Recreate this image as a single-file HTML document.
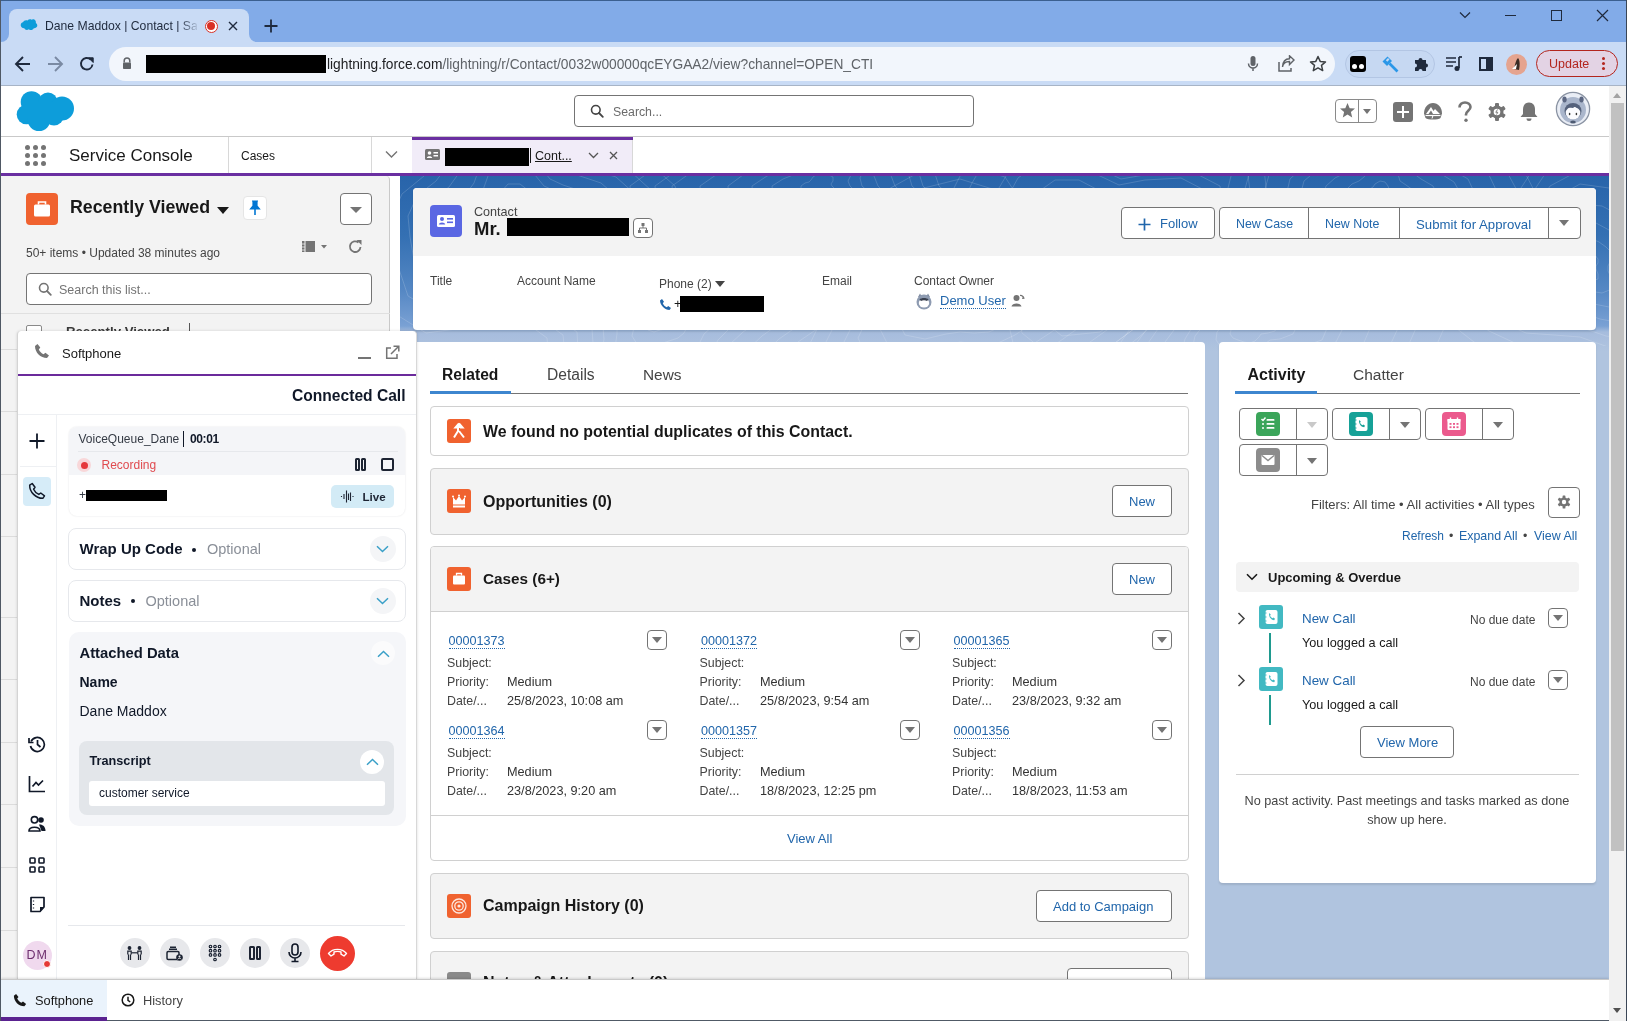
<!DOCTYPE html>
<html><head><meta charset="utf-8">
<style>
*{box-sizing:border-box;margin:0;padding:0}
html,body{width:1627px;height:1021px;overflow:hidden;background:#fff;font-family:"Liberation Sans",sans-serif;color:#181818}
.a{position:absolute}
.t{position:absolute;white-space:nowrap;line-height:1}
svg{display:block}
.btn{position:absolute;background:#fff;border:1px solid #747474;border-radius:4px}
.lnk{color:#2166ab}
.dd{position:absolute;width:20px;height:20px;border:1px solid #747474;border-radius:4px;background:#fff}
.dd:after{content:"";position:absolute;left:4px;top:6px;border-left:5px solid transparent;border-right:5px solid transparent;border-top:6px solid #747474}
</style></head><body><div id="root" style="position:absolute;left:0;top:0;width:1627px;height:1021px;overflow:hidden;will-change:transform">

<!-- ============ CHROME FRAME ============ -->
<div class="a" style="left:0;top:0;width:1627px;height:86px;background:#82abe8"></div>
<div class="a" style="left:0;top:0;width:1627px;height:1px;background:#3b5f8f"></div>
<div class="a" style="left:0;top:0;width:1px;height:1021px;background:#4f5864;z-index:50"></div>
<!-- active tab -->
<div class="a" style="left:9px;top:9px;width:240px;height:40px;background:#c9dbf5;border-radius:8px 8px 0 0"></div>
<!-- toolbar -->
<div class="a" style="left:0;top:42px;width:1627px;height:43px;background:#c9dbf5"></div>
<div class="a" style="left:0;top:85px;width:1627px;height:1px;background:#a7b4c6"></div>

<!-- tab concave corners -->
<div class="a" style="left:249px;top:34px;width:10px;height:10px;background:#c9dbf5"></div>
<div class="a" style="left:249px;top:32px;width:12px;height:10px;background:#82abe8;border-radius:0 0 0 8px"></div>
<div class="a" style="left:0px;top:34px;width:9px;height:10px;background:#c9dbf5"></div>
<div class="a" style="left:-2px;top:32px;width:11px;height:10px;background:#82abe8;border-radius:0 0 8px 0"></div>
<!-- favicon cloud -->
<svg class="a" style="left:20px;top:19px" width="18" height="13" viewBox="0 0 18 13"><path d="M7.5 1.5c1-1.2 2.7-1.6 4-.8 .6-.5 1.5-.7 2.3-.4 1.7.6 2.4 2.3 2 3.6 1.4.8 1.9 2.5 1.1 3.9-.6 1.1-1.9 1.6-3.1 1.4-.6 1.3-2 2.1-3.5 1.8-.6-.1-1.1-.4-1.5-.8-.9.9-2.4 1.1-3.5.4-.6-.3-1-.9-1.2-1.5C2.7 9.3 1.2 8.4.8 6.8.4 5 1.6 3.3 3.3 3c.4-1.4 2.2-2.2 4.2-1.5z" fill="#0d9dda"/></svg>
<div class="t" style="left:45px;top:20px;font-size:12.2px;color:#1f2a3d;width:152px;overflow:hidden">Dane Maddox | Contact | Sal</div>
<div class="a" style="left:180px;top:14px;width:20px;height:24px;background:linear-gradient(90deg,rgba(201,219,245,0),#c9dbf5)"></div>
<!-- record dot -->
<div class="a" style="left:204.5px;top:19.5px;width:13px;height:13px;border-radius:50%;border:1.3px solid #d93025;background:#fff"></div>
<div class="a" style="left:207px;top:22px;width:8px;height:8px;border-radius:50%;background:#d93025"></div>
<!-- close x -->
<svg class="a" style="left:228px;top:21px" width="10" height="10" viewBox="0 0 10 10"><path d="M1 1L9 9M9 1L1 9" stroke="#1f2a3d" stroke-width="1.4"/></svg>
<!-- new tab + -->
<svg class="a" style="left:264px;top:19px" width="14" height="14" viewBox="0 0 14 14"><path d="M7 0.5V13.5M0.5 7H13.5" stroke="#1f2a3d" stroke-width="1.8"/></svg>
<!-- window controls -->
<svg class="a" style="left:1459px;top:11px" width="12" height="8" viewBox="0 0 12 8"><path d="M1 1.5L6 6.5L11 1.5" fill="none" stroke="#1f2a3d" stroke-width="1.2"/></svg>
<div class="a" style="left:1505px;top:15px;width:11px;height:1px;background:#1f2a3d"></div>
<div class="a" style="left:1551px;top:10px;width:11px;height:11px;border:1.2px solid #1f2a3d"></div>
<svg class="a" style="left:1596px;top:9px" width="13" height="13" viewBox="0 0 13 13"><path d="M1 1L12 12M12 1L1 12" stroke="#1f2a3d" stroke-width="1.2"/></svg>
<!-- nav buttons -->
<svg class="a" style="left:14px;top:55px" width="18" height="18" viewBox="0 0 18 18"><path d="M16 9H2.5M9 2L2 9L9 16" fill="none" stroke="#1f2a3d" stroke-width="1.9"/></svg>
<svg class="a" style="left:46px;top:55px" width="18" height="18" viewBox="0 0 18 18"><path d="M2 9H15.5M9 2L16 9L9 16" fill="none" stroke="#7a8aa3" stroke-width="1.9"/></svg>
<svg class="a" style="left:78px;top:55px" width="18" height="18" viewBox="0 0 18 18"><path d="M14.5 9.5A5.8 5.8 0 1 1 12.8 4.6" fill="none" stroke="#1f2a3d" stroke-width="1.9"/><path d="M10.5 2.8H15.2V7.5Z" fill="#1f2a3d" stroke="#1f2a3d" stroke-width="1"/></svg>
<!-- omnibox -->
<div class="a" style="left:109px;top:47px;width:1226px;height:34px;background:#f2f6fc;border-radius:17px"></div>
<svg class="a" style="left:122px;top:57px" width="10" height="13" viewBox="0 0 10 13"><path d="M2.2 5.5V3.8A2.8 2.8 0 0 1 7.8 3.8V5.5" fill="none" stroke="#5f6368" stroke-width="1.5"/><rect x="1" y="5.5" width="8" height="6.5" rx=".8" fill="#5f6368"/></svg>
<div class="a" style="left:146px;top:55px;width:180px;height:18px;background:#000"></div>
<div class="t" style="left:327px;top:58px;font-size:13.75px;color:#5f6368"><span style="color:#202124">lightning.force.com</span>/lightning/r/Contact/0032w00000qcEYGAA2/view?channel=OPEN_CTI</div>
<!-- mic, share, star -->
<svg class="a" style="left:1246px;top:55px" width="14" height="18" viewBox="0 0 14 18"><rect x="4.5" y="1" width="5" height="10" rx="2.5" fill="#5f6368"/><path d="M2.5 8.5A4.5 4.5 0 0 0 11.5 8.5M7 13V16" fill="none" stroke="#5f6368" stroke-width="1.5"/></svg>
<svg class="a" style="left:1277px;top:55px" width="18" height="18" viewBox="0 0 18 18"><path d="M2 7V16H14V13" fill="none" stroke="#5f6368" stroke-width="1.5"/><path d="M5.5 12C6 8 9 6.5 12.5 6.5V9.5L17 5L12.5 0.8V3.8C8 3.8 5.8 7 5.5 12Z" fill="none" stroke="#5f6368" stroke-width="1.4"/></svg>
<svg class="a" style="left:1309px;top:55px" width="18" height="18" viewBox="0 0 18 18"><path d="M9 1.5L11.2 6.4L16.5 6.9L12.5 10.4L13.7 15.6L9 12.9L4.3 15.6L5.5 10.4L1.5 6.9L6.8 6.4Z" fill="none" stroke="#3c4043" stroke-width="1.5" stroke-linejoin="round"/></svg>
<!-- extensions pill -->
<div class="a" style="left:1345px;top:50px;width:90px;height:28px;background:#c6d8f2;border:1px solid #b3c6e4;border-radius:14px"></div>
<div class="a" style="left:1350px;top:56px;width:16px;height:16px;background:#000;border-radius:3px"></div>
<div class="a" style="left:1352px;top:64px;width:5px;height:5px;background:#fff;border-radius:50%"></div>
<div class="a" style="left:1359px;top:64px;width:5px;height:5px;background:#fff;border-radius:50%"></div>
<svg class="a" style="left:1381px;top:55px" width="20" height="18" viewBox="0 0 20 18"><path d="M1.5 6.5L6.5 1.5L11 6L6 11Z" fill="#2a97e8"/><path d="M4.8 5.2L7 3L8.5 4.5L6.3 6.7Z" fill="#c6d8f2"/><path d="M8.5 8.5L16.5 16.5" stroke="#2a97e8" stroke-width="2.6"/></svg>
<svg class="a" style="left:1412px;top:55px" width="18" height="18" viewBox="0 0 18 18"><path d="M3 5H6.5A2 2 0 0 1 10.5 5H14V8.5A2 2 0 0 1 14 12.5V16H10.5A2 2 0 0 0 6.5 16H3V12.5A2 2 0 0 0 3 8.5Z" fill="#1f2a3d"/></svg>
<!-- reading list / side panel / avatar -->
<svg class="a" style="left:1445px;top:55px" width="18" height="17" viewBox="0 0 18 17"><path d="M1 3H11M1 7H11M1 11H8" stroke="#1f2a3d" stroke-width="1.7"/><path d="M14 2V13" stroke="#1f2a3d" stroke-width="1.7"/><circle cx="12" cy="13.5" r="2.5" fill="#1f2a3d"/><path d="M14 2H17" stroke="#1f2a3d" stroke-width="1.7"/></svg>
<div class="a" style="left:1479px;top:57px;width:14px;height:14px;border:2px solid #1f2a3d"></div>
<div class="a" style="left:1486px;top:57px;width:7px;height:14px;background:#1f2a3d"></div>
<div class="a" style="left:1506px;top:54px;width:21px;height:21px;border-radius:50%;background:#e5a48f"></div>
<svg class="a" style="left:1510px;top:56px" width="14" height="18" viewBox="0 0 14 18"><path d="M8 2C10 4 10 9 9 14L4 13C5 8 6 4 8 2Z" fill="#3a2b24"/><path d="M7 8L2 13L6 13Z" fill="#fff"/></svg>
<!-- update -->
<div class="a" style="left:1536px;top:50px;width:82px;height:27px;border:1.3px solid #b3261e;border-radius:14px;background:#e3d3e4"></div>
<div class="t" style="left:1549px;top:58px;font-size:12.5px;color:#b3261e">Update</div>
<div class="a" style="left:1602px;top:57px;width:3px;height:3px;border-radius:50%;background:#b3261e;box-shadow:0 5px 0 #b3261e,0 10px 0 #b3261e"></div>

<!-- ============ SF HEADER ============ -->
<div class="a" style="left:1px;top:86px;width:1608px;height:50px;background:#fff"></div>
<div class="a" style="left:1px;top:136px;width:1608px;height:1px;background:#c9c9c9"></div>
<!-- salesforce cloud -->
<svg class="a" style="left:16px;top:90px" width="60" height="42" viewBox="0 0 60 42"><g fill="#0d9dda"><circle cx="15.5" cy="12" r="10.8"/><circle cx="32" cy="12" r="9.5"/><circle cx="46" cy="18.5" r="12"/><circle cx="10.5" cy="24.5" r="9.8"/><circle cx="23" cy="29.5" r="11.5"/><circle cx="38" cy="25.5" r="10"/><rect x="10" y="12" width="36" height="16"/></g></svg>
<!-- search -->
<div class="a" style="left:574px;top:95px;width:400px;height:32px;border:1px solid #747474;border-radius:4px;background:#fff"></div>
<svg class="a" style="left:590px;top:104px" width="14" height="14" viewBox="0 0 14 14"><circle cx="5.8" cy="5.8" r="4.3" fill="none" stroke="#444" stroke-width="1.6"/><path d="M9 9L12.8 12.8" stroke="#444" stroke-width="1.8" stroke-linecap="round"/></svg>
<div class="t" style="left:613px;top:106px;font-size:12.3px;color:#6b6b6b">Search...</div>
<!-- favorites -->
<div class="a" style="left:1335px;top:99px;width:42px;height:24px;border:1px solid #8a8a8a;border-radius:4px;background:#fff"></div>
<div class="a" style="left:1358px;top:99px;width:1px;height:24px;background:#8a8a8a"></div>
<svg class="a" style="left:1339px;top:102px" width="17" height="17" viewBox="0 0 17 17"><path d="M8.5 1L10.7 6.2L16 6.6L11.9 10.1L13.2 15.5L8.5 12.6L3.8 15.5L5.1 10.1L1 6.6L6.3 6.2Z" fill="#747474"/></svg>
<div class="a" style="left:1363px;top:109px;border-left:4.5px solid transparent;border-right:4.5px solid transparent;border-top:5px solid #747474"></div>
<!-- plus -->
<div class="a" style="left:1393px;top:102px;width:20px;height:20px;border-radius:3px;background:#747474"></div>
<div class="a" style="left:1397px;top:111px;width:12px;height:2.2px;background:#fff"></div>
<div class="a" style="left:1402px;top:106px;width:2.2px;height:12px;background:#fff"></div>
<!-- trailhead -->
<svg class="a" style="left:1423px;top:102px" width="20" height="19" viewBox="0 0 20 19"><path d="M10 1C5 1 1 5.5 1 11.5L2.5 16C5 18 15 18 17.5 16L19 11.5C19 5.5 15 1 10 1Z" fill="#747474"/><path d="M3 12L8 5L10.5 9L12 7L17 12Z" fill="#fff"/><path d="M5.5 12L8 8.5L10 12Z" fill="#747474"/><path d="M2.5 13.5H17.5" stroke="#fff" stroke-width="1.2"/><path d="M10 13.5L9 16.5" stroke="#fff" stroke-width="1"/></svg>
<!-- help -->
<svg class="a" style="left:1457px;top:101px" width="16" height="22" viewBox="0 0 16 22"><path d="M2.5 6.5C2.5 3.2 5 1.5 8 1.5S13.5 3.3 13.5 6C13.5 9.5 9 10 9 13.5V14.5" fill="none" stroke="#747474" stroke-width="2.6"/><circle cx="9" cy="19.2" r="1.7" fill="#747474"/></svg>
<!-- gear -->
<svg class="a" style="left:1487px;top:102px" width="20" height="20" viewBox="0 0 20 20"><g fill="#747474"><circle cx="10" cy="10" r="6.5"/><rect x="8" y="1" width="4" height="18" rx="1"/><rect x="8" y="1" width="4" height="18" rx="1" transform="rotate(60 10 10)"/><rect x="8" y="1" width="4" height="18" rx="1" transform="rotate(120 10 10)"/></g><circle cx="10" cy="10" r="3.3" fill="#fff"/><path d="M10.5 7.5L8.8 10.3H10.8L9.5 12.5" fill="none" stroke="#747474" stroke-width="0.9"/></svg>
<!-- bell -->
<svg class="a" style="left:1519px;top:101px" width="20" height="21" viewBox="0 0 20 21"><path d="M10 1.5C6 1.5 4 4.5 4 8.5V13L1.5 16H18.5L16 13V8.5C16 4.5 14 1.5 10 1.5Z" fill="#747474"/><path d="M7.5 17.5A2.5 2.5 0 0 0 12.5 17.5Z" fill="#747474"/></svg>
<!-- avatar -->
<svg class="a" style="left:1555px;top:91px" width="36" height="36" viewBox="0 0 36 36"><circle cx="18" cy="18" r="16.6" fill="#e9edf5" stroke="#8a93a3" stroke-width="1.3"/><circle cx="18" cy="19" r="13" fill="#aab6cc"/><ellipse cx="9.5" cy="8.5" rx="2.2" ry="3" fill="#5c6782"/><ellipse cx="26.5" cy="8.5" rx="2.2" ry="3" fill="#5c6782"/><ellipse cx="18" cy="20" rx="8.5" ry="8" fill="#55627c"/><ellipse cx="18" cy="22" rx="7.3" ry="6.3" fill="#fbfcff"/><path d="M11 18C13 14 22 14 25 18L22 17L20 15.5L18 17L14 16.5Z" fill="#55627c"/><ellipse cx="14.6" cy="23" rx=".8" ry="1.2" fill="#333"/><ellipse cx="21.4" cy="23" rx=".8" ry="1.2" fill="#333"/><ellipse cx="18" cy="31" rx="2.8" ry="1.6" fill="#4d5a72"/></svg>

<!-- ============ NAV BAR ============ -->
<div class="a" style="left:1px;top:137px;width:1608px;height:36px;background:#fff"></div>
<div class="a" style="left:1px;top:173px;width:1608px;height:3px;background:#6a2fa1"></div>
<!-- app launcher -->
<svg class="a" style="left:24px;top:144px" width="23" height="23" viewBox="0 0 23 23"><g fill="#747474"><circle cx="3.5" cy="3.5" r="2.5"/><circle cx="11.5" cy="3.5" r="2.5"/><circle cx="19.5" cy="3.5" r="2.5"/><circle cx="3.5" cy="11.5" r="2.5"/><circle cx="11.5" cy="11.5" r="2.5"/><circle cx="19.5" cy="11.5" r="2.5"/><circle cx="3.5" cy="19.5" r="2.5"/><circle cx="11.5" cy="19.5" r="2.5"/><circle cx="19.5" cy="19.5" r="2.5"/></g></svg>
<div class="t" style="left:69px;top:147px;font-size:17px;color:#181818">Service Console</div>
<div class="a" style="left:228px;top:137px;width:1px;height:36px;background:#d8d8d8"></div>
<div class="t" style="left:241px;top:150px;font-size:12px;color:#181818">Cases</div>
<div class="a" style="left:371px;top:137px;width:1px;height:36px;background:#d8d8d8"></div>
<svg class="a" style="left:385px;top:150px" width="13" height="9" viewBox="0 0 13 9"><path d="M1 1.5L6.5 7L12 1.5" fill="none" stroke="#747474" stroke-width="1.4"/></svg>
<!-- active tab -->
<div class="a" style="left:412px;top:137px;width:221px;height:36px;background:#f1ecf8;border-right:1px solid #d8d8d8"></div>
<div class="a" style="left:412px;top:137px;width:221px;height:3px;background:#6a2fa1"></div>
<svg class="a" style="left:425px;top:149px" width="15" height="11" viewBox="0 0 15 11"><rect x="0" y="0" width="15" height="11" rx="1.5" fill="#747474"/><circle cx="4.5" cy="4" r="1.8" fill="#fff"/><path d="M1.8 9C2 6.5 7 6.5 7.2 9Z" fill="#fff"/><rect x="8.5" y="3" width="4.5" height="1.5" fill="#fff"/><rect x="8.5" y="6" width="4.5" height="1.5" fill="#fff"/></svg>
<div class="a" style="left:445px;top:147.5px;width:84px;height:18.5px;background:#000"></div>
<div class="a" style="left:530px;top:148px;width:1px;height:15px;background:#181818"></div>
<div class="t" style="left:535px;top:150px;font-size:12.5px;color:#181818;text-decoration:underline">Cont...</div>
<svg class="a" style="left:588px;top:152px" width="11" height="7" viewBox="0 0 11 7"><path d="M1 1L5.5 5.5L10 1" fill="none" stroke="#555" stroke-width="1.3"/></svg>
<svg class="a" style="left:609px;top:151px" width="9" height="9" viewBox="0 0 9 9"><path d="M1 1L8 8M8 1L1 8" stroke="#555" stroke-width="1.3"/></svg>

<!-- ============ LEFT LIST PANEL ============ -->
<div class="a" style="left:1px;top:176px;width:389px;height:803px;background:#f3f3f3;border-right:1px solid #c9c9c9;border-radius:0 4px 0 0"></div>
<div class="a" style="left:390px;top:176px;width:10px;height:803px;background:#fff"></div>
<div class="a" style="left:26px;top:193px;width:32px;height:32px;border-radius:4px;background:#f0622f"></div>
<svg class="a" style="left:26px;top:193px" width="32" height="32" viewBox="0 0 32 32"><rect x="8" y="11.5" width="16" height="12" rx="1.5" fill="#fff"/><path d="M12.5 11.5V9H19.5V11.5" fill="none" stroke="#fff" stroke-width="1.6"/></svg>
<div class="t" style="left:70px;top:199px;font-size:17.8px;font-weight:700;color:#181818">Recently Viewed</div>
<div class="a" style="left:217px;top:207px;border-left:6px solid transparent;border-right:6px solid transparent;border-top:7px solid #181818"></div>
<div class="a" style="left:243px;top:196px;width:24px;height:24px;border:1px solid #e5e5e5;border-radius:4px;background:#fff"></div>
<svg class="a" style="left:249px;top:200px" width="12" height="16" viewBox="0 0 12 16"><path d="M3 1H9M4 1.5V6L1.5 9H10.5L8 6V1.5Z" fill="#0176d3" stroke="#0176d3" stroke-width="1.2"/><path d="M6 9V15" stroke="#0176d3" stroke-width="1.6"/></svg>
<div class="a" style="left:340px;top:193px;width:32px;height:32px;border:1px solid #747474;border-radius:4px;background:#fff"></div>
<div class="a" style="left:350px;top:207px;border-left:6px solid transparent;border-right:6px solid transparent;border-top:6px solid #747474"></div>
<div class="t" style="left:26px;top:247px;font-size:12px;color:#444">50+ items • Updated 38 minutes ago</div>
<svg class="a" style="left:301px;top:240px" width="26" height="13" viewBox="0 0 26 13"><rect x="1" y="1" width="13" height="11" fill="#747474"/><path d="M4 1V12" stroke="#f3f3f3" stroke-width="1"/><path d="M1 4H4M1 7H4M1 10H4" stroke="#f3f3f3" stroke-width="0.8"/><path d="M20 5H26L23 8.5Z" fill="#747474"/></svg>
<svg class="a" style="left:348px;top:239px" width="15" height="15" viewBox="0 0 15 15"><path d="M12.5 8A5.3 5.3 0 1 1 10.5 3.5" fill="none" stroke="#747474" stroke-width="1.8"/><path d="M8.5 1H13.5V6Z" fill="#747474"/></svg>
<div class="a" style="left:26px;top:273px;width:346px;height:32px;border:1px solid #747474;border-radius:4px;background:#fff"></div>
<svg class="a" style="left:38px;top:282px" width="14" height="14" viewBox="0 0 14 14"><circle cx="5.8" cy="5.8" r="4.3" fill="none" stroke="#747474" stroke-width="1.6"/><path d="M9 9L12.8 12.8" stroke="#747474" stroke-width="1.8" stroke-linecap="round"/></svg>
<div class="t" style="left:59px;top:284px;font-size:12.5px;color:#747474">Search this list...</div>
<div class="a" style="left:1px;top:313px;width:389px;height:1px;background:#e0e0e0"></div>
<div class="a" style="left:26px;top:325px;width:16px;height:16px;border:1px solid #8a8a8a;border-radius:2px;background:#fff"></div>
<div class="t" style="left:66px;top:325px;font-size:13.2px;font-weight:700;color:#3a3a3a">Recently Viewed</div>
<div class="a" style="left:188.5px;top:323px;width:1px;height:10px;background:#555"></div>
<div class="a" style="left:1px;top:349px;width:17px;height:1px;background:#dcdcdc"></div>
<div class="a" style="left:1px;top:411px;width:17px;height:1px;background:#dcdcdc"></div>
<div class="a" style="left:1px;top:474px;width:17px;height:1px;background:#dcdcdc"></div>
<div class="a" style="left:1px;top:536px;width:17px;height:1px;background:#dcdcdc"></div>
<div class="a" style="left:1px;top:617px;width:17px;height:1px;background:#dcdcdc"></div>
<div class="a" style="left:1px;top:679px;width:17px;height:1px;background:#dcdcdc"></div>
<div class="a" style="left:1px;top:742px;width:17px;height:1px;background:#dcdcdc"></div>
<div class="a" style="left:1px;top:804px;width:17px;height:1px;background:#dcdcdc"></div>
<div class="a" style="left:1px;top:867px;width:17px;height:1px;background:#dcdcdc"></div>
<div class="a" style="left:1px;top:930px;width:17px;height:1px;background:#dcdcdc"></div>


<!-- ============ BRAND BG ============ -->
<div class="a" style="left:400px;top:176px;width:1209px;height:803px;background:linear-gradient(180deg,#2864aa 0px,#3470b3 60px,#5688c4 115px,#7aa1d4 150px,#a6bcdd 156px,#b0c4df 175px,#b0c4df 803px)"></div>
<svg class="a" style="left:400px;top:176px" width="1209" height="170" viewBox="0 0 1209 170"><g fill="none" stroke="#ffffff" stroke-opacity=".16" stroke-width="1"><path d="M139 40 L139 44 L138 48 L134 50 L128 50 L123 49 L120 50 L115 53 L109 53 L105 51 L103 47 L103 43 L103 40 L104 37 L107 35 L109 32 L110 28 L114 24 L120 24 L125 28 L127 31 L130 33 L135 34 L138 37 L139 40Z"/><path d="M158 40 L158 47 L157 55 L149 61 L137 61 L127 58 L120 60 L110 65 L98 67 L90 62 L87 54 L86 47 L85 40 L88 34 L94 29 L98 24 L101 16 L108 8 L120 8 L129 15 L134 22 L141 25 L150 28 L156 33 L158 40Z"/><path d="M182 40 L183 52 L181 65 L168 74 L148 74 L131 71 L120 73 L104 82 L84 85 L70 76 L65 63 L63 51 L62 40 L67 30 L77 22 L83 14 L88 0 L100 -12 L120 -12 L135 -1 L144 10 L155 15 L169 20 L179 29 L182 40Z"/><path d="M198 40 L199 55 L196 71 L180 83 L155 83 L134 78 L120 82 L100 92 L75 96 L57 85 L52 68 L50 53 L48 40 L54 27 L66 18 L74 7 L80 -10 L96 -25 L120 -25 L139 -11 L150 3 L163 9 L181 15 L194 26 L198 40Z"/><path d="M222 40 L223 60 L219 81 L199 96 L166 96 L139 90 L120 95 L94 109 L61 113 L38 99 L30 77 L27 58 L25 40 L33 23 L49 11 L59 -3 L67 -25 L88 -46 L120 -46 L145 -27 L159 -9 L177 -1 L201 7 L217 21 L222 40Z"/><path d="M241 40 L242 63 L238 89 L213 106 L174 107 L142 99 L120 105 L89 122 L50 127 L23 110 L14 84 L10 61 L8 40 L17 20 L36 5 L48 -11 L57 -37 L82 -61 L120 -62 L150 -39 L166 -17 L187 -8 L216 1 L235 18 L241 40Z"/><path d="M259 40 L260 67 L255 96 L227 116 L182 117 L146 108 L120 114 L85 134 L40 139 L8 120 L-2 90 L-6 64 L-8 40 L2 18 L24 0 L38 -19 L48 -49 L76 -76 L120 -76 L154 -51 L173 -26 L197 -15 L230 -5 L252 15 L259 40Z"/><path d="M283 40 L285 72 L279 105 L245 129 L193 130 L150 120 L120 127 L79 150 L26 157 L-11 134 L-23 99 L-28 68 L-31 40 L-18 14 L7 -7 L23 -29 L36 -64 L69 -96 L120 -97 L160 -67 L183 -37 L211 -25 L249 -13 L275 10 L283 40Z"/><path d="M432 10 L435 13 L436 17 L433 20 L428 20 L424 20 L420 21 L416 20 L413 18 L410 17 L406 16 L401 14 L401 10 L405 7 L409 6 L411 4 L413 1 L416 -1 L420 -2 L424 -2 L429 -1 L433 1 L433 5 L431 8 L432 10Z"/><path d="M450 10 L457 17 L460 27 L453 33 L440 35 L430 36 L420 36 L411 34 L404 30 L396 27 L385 25 L373 19 L372 10 L383 3 L393 -1 L398 -6 L402 -12 L410 -18 L420 -19 L431 -19 L442 -18 L451 -12 L452 -3 L448 5 L450 10Z"/><path d="M462 10 L473 20 L477 34 L467 43 L449 46 L434 47 L420 48 L407 45 L397 39 L386 34 L370 31 L353 23 L352 10 L367 -0 L382 -6 L389 -12 L394 -22 L405 -29 L420 -31 L435 -31 L452 -29 L464 -22 L465 -9 L460 2 L462 10Z"/><path d="M478 10 L492 24 L498 42 L483 55 L460 59 L439 60 L420 61 L402 57 L388 49 L374 43 L351 38 L329 27 L328 10 L347 -4 L368 -11 L377 -20 L385 -34 L400 -43 L420 -46 L441 -46 L463 -44 L480 -33 L481 -15 L474 -0 L478 10Z"/><path d="M495 10 L514 28 L521 52 L502 69 L472 74 L444 75 L420 76 L397 72 L379 61 L360 53 L331 47 L302 33 L300 10 L326 -8 L353 -18 L365 -29 L374 -47 L394 -59 L420 -63 L447 -63 L476 -60 L498 -46 L500 -23 L490 -3 L495 10Z"/><path d="M512 10 L536 32 L545 62 L522 83 L484 89 L450 90 L420 92 L391 86 L369 73 L346 63 L310 55 L275 38 L272 10 L303 -12 L337 -24 L352 -39 L363 -60 L388 -76 L420 -80 L454 -80 L489 -76 L516 -59 L518 -31 L507 -7 L512 10Z"/><path d="M523 10 L549 35 L559 67 L534 91 L491 98 L454 99 L420 101 L388 95 L363 80 L338 69 L297 61 L258 41 L255 10 L290 -15 L327 -28 L344 -44 L357 -68 L384 -86 L420 -90 L458 -90 L497 -86 L527 -67 L530 -35 L517 -9 L523 10Z"/><path d="M539 10 L569 38 L581 76 L551 103 L502 111 L459 113 L420 115 L383 108 L355 91 L325 78 L279 68 L233 46 L230 10 L270 -19 L313 -34 L332 -53 L347 -80 L379 -100 L420 -106 L463 -105 L509 -100 L544 -78 L546 -42 L532 -11 L539 10Z"/><path d="M721 60 L719 64 L717 67 L713 69 L709 71 L705 74 L700 77 L693 78 L688 74 L687 69 L686 66 L682 63 L679 60 L679 56 L681 52 L683 48 L688 45 L694 45 L700 48 L704 50 L709 49 L716 48 L722 51 L722 56 L721 60Z"/><path d="M743 60 L740 68 L735 75 L726 79 L718 82 L711 88 L700 96 L686 98 L676 90 L673 79 L671 72 L664 67 L657 60 L657 52 L661 44 L666 35 L675 29 L688 29 L700 35 L708 39 L719 37 L734 36 L745 41 L747 51 L743 60Z"/><path d="M760 60 L756 71 L749 80 L737 86 L725 90 L715 99 L700 110 L680 112 L667 101 L663 86 L660 77 L650 70 L641 60 L641 49 L646 38 L652 26 L665 17 L684 17 L700 25 L711 30 L726 28 L747 26 L763 34 L764 48 L760 60Z"/><path d="M778 60 L772 74 L764 86 L748 94 L732 100 L719 111 L700 125 L674 128 L657 114 L652 94 L648 82 L634 73 L623 60 L623 45 L629 31 L638 16 L655 4 L679 4 L700 15 L715 21 L734 18 L762 16 L782 26 L784 44 L778 60Z"/><path d="M802 60 L795 78 L784 94 L763 105 L742 112 L725 127 L700 146 L666 150 L643 131 L637 105 L631 88 L613 77 L598 60 L598 41 L607 22 L618 2 L640 -14 L672 -14 L700 0 L719 9 L745 4 L781 2 L808 16 L811 39 L802 60Z"/><path d="M814 60 L806 80 L793 98 L770 110 L747 118 L728 135 L700 156 L662 160 L636 139 L630 110 L623 92 L603 78 L587 60 L586 38 L596 17 L609 -5 L633 -22 L669 -22 L700 -7 L721 3 L750 -2 L791 -5 L820 10 L823 36 L814 60Z"/><path d="M841 60 L831 85 L815 107 L786 122 L758 132 L735 152 L700 178 L654 183 L622 157 L613 122 L605 99 L581 83 L560 60 L560 33 L572 7 L588 -20 L618 -42 L662 -41 L700 -22 L726 -10 L762 -16 L812 -20 L848 -1 L852 31 L841 60Z"/><path d="M855 60 L845 88 L827 112 L795 128 L764 139 L738 162 L700 191 L649 196 L613 167 L604 128 L595 103 L569 85 L545 60 L545 30 L559 2 L576 -29 L609 -52 L658 -52 L700 -31 L729 -17 L768 -24 L823 -28 L864 -7 L868 28 L855 60Z"/><path d="M997 20 L996 23 L996 27 L994 30 L989 32 L984 30 L980 29 L977 29 L971 31 L966 30 L963 27 L963 23 L964 20 L964 17 L967 15 L970 13 L973 11 L975 8 L980 5 L985 6 L988 10 L989 13 L992 15 L995 17 L997 20Z"/><path d="M1016 20 L1016 27 L1014 34 L1010 42 L1000 45 L989 43 L980 39 L973 40 L962 43 L950 42 L944 35 L944 27 L944 20 L946 14 L952 8 L959 5 L964 1 L970 -7 L980 -13 L991 -10 L998 -2 L1000 5 L1006 9 L1013 14 L1016 20Z"/><path d="M1038 20 L1037 31 L1034 42 L1028 54 L1012 60 L994 56 L980 50 L968 51 L951 56 L932 55 L922 44 L922 31 L923 20 L926 10 L935 2 L947 -4 L955 -11 L964 -23 L980 -32 L998 -28 L1008 -14 L1013 -3 L1021 3 L1033 10 L1038 20Z"/><path d="M1062 20 L1060 35 L1057 52 L1048 68 L1026 77 L999 71 L980 62 L963 64 L938 71 L911 69 L898 54 L898 36 L900 20 L904 5 L917 -6 L933 -13 L945 -24 L957 -41 L980 -53 L1005 -48 L1019 -29 L1026 -13 L1038 -4 L1054 6 L1062 20Z"/><path d="M1076 20 L1074 38 L1070 57 L1060 77 L1034 87 L1003 80 L980 70 L961 72 L931 81 L899 78 L884 60 L883 38 L886 20 L890 3 L905 -11 L925 -19 L939 -31 L953 -51 L980 -66 L1010 -60 L1026 -37 L1034 -19 L1049 -8 L1068 3 L1076 20Z"/><path d="M1099 20 L1097 42 L1092 66 L1079 91 L1047 103 L1008 95 L980 82 L956 84 L919 95 L880 91 L860 69 L860 43 L863 20 L869 -1 L887 -18 L912 -29 L929 -44 L947 -69 L980 -87 L1017 -79 L1038 -51 L1047 -28 L1065 -15 L1089 -1 L1099 20Z"/><path d="M1120 20 L1117 46 L1111 74 L1096 103 L1058 117 L1013 107 L980 92 L952 95 L909 108 L863 104 L840 78 L840 47 L843 20 L850 -5 L872 -25 L900 -37 L920 -54 L941 -84 L980 -105 L1023 -96 L1047 -63 L1059 -36 L1080 -21 L1107 -4 L1120 20Z"/><path d="M1137 20 L1134 50 L1128 81 L1110 113 L1068 129 L1017 118 L980 101 L948 105 L900 119 L848 114 L823 85 L822 50 L826 20 L833 -8 L858 -30 L890 -44 L912 -64 L936 -97 L980 -121 L1029 -110 L1056 -74 L1069 -43 L1092 -26 L1123 -7 L1137 20Z"/><path d="M1196 90 L1196 93 L1198 98 L1198 103 L1192 105 L1185 104 L1180 102 L1176 102 L1171 102 L1167 100 L1163 97 L1159 94 L1156 90 L1157 86 L1164 83 L1169 82 L1172 80 L1175 76 L1180 74 L1186 74 L1191 77 L1195 79 L1198 83 L1198 87 L1196 90Z"/><path d="M1208 90 L1208 95 L1212 103 L1212 113 L1202 117 L1189 115 L1180 112 L1172 111 L1163 110 L1156 107 L1150 102 L1143 97 L1137 90 L1140 82 L1151 78 L1161 77 L1166 73 L1171 66 L1180 61 L1190 62 L1199 66 L1206 71 L1212 77 L1211 84 L1208 90Z"/><path d="M1223 90 L1224 98 L1230 111 L1229 125 L1214 132 L1194 128 L1180 124 L1168 123 L1154 122 L1143 117 L1133 109 L1122 101 L1113 90 L1117 78 L1135 71 L1151 69 L1159 64 L1166 52 L1180 45 L1196 47 L1209 54 L1221 61 L1229 70 L1229 81 L1223 90Z"/><path d="M1240 90 L1240 102 L1249 119 L1247 138 L1227 148 L1200 143 L1180 136 L1163 135 L1145 134 L1129 127 L1116 116 L1100 105 L1088 90 L1094 73 L1118 64 L1140 61 L1151 54 L1161 38 L1180 28 L1202 30 L1221 40 L1236 50 L1247 62 L1247 77 L1240 90Z"/><path d="M1258 90 L1259 105 L1271 127 L1268 153 L1241 165 L1206 160 L1180 151 L1158 149 L1134 147 L1113 138 L1096 125 L1076 110 L1059 90 L1067 68 L1098 56 L1128 53 L1141 42 L1155 22 L1180 8 L1209 12 L1233 24 L1254 37 L1268 54 L1268 73 L1258 90Z"/><path d="M1272 90 L1273 108 L1287 134 L1284 164 L1252 179 L1211 172 L1180 161 L1154 159 L1126 157 L1101 146 L1081 131 L1057 114 L1038 90 L1047 65 L1084 50 L1119 46 L1135 34 L1150 10 L1180 -6 L1215 -2 L1243 13 L1267 28 L1284 47 L1283 70 L1272 90Z"/><path d="M1286 90 L1288 111 L1304 141 L1301 176 L1263 193 L1216 185 L1180 173 L1150 170 L1117 168 L1089 155 L1065 137 L1038 117 L1015 90 L1026 60 L1069 44 L1109 39 L1127 25 L1145 -2 L1180 -21 L1220 -17 L1253 0 L1280 18 L1300 40 L1300 67 L1286 90Z"/><path d="M1304 90 L1305 114 L1324 149 L1320 190 L1276 209 L1221 200 L1180 186 L1145 183 L1107 181 L1074 166 L1047 145 L1015 122 L989 90 L1001 56 L1051 37 L1097 31 L1119 15 L1140 -17 L1180 -39 L1227 -34 L1264 -14 L1297 7 L1320 32 L1319 63 L1304 90Z"/><path d="M281 140 L277 143 L274 146 L272 149 L269 151 L265 153 L260 154 L254 156 L248 154 L246 150 L247 146 L246 143 L243 140 L239 136 L241 132 L245 129 L250 128 L255 126 L260 127 L264 129 L268 131 L273 131 L280 132 L284 135 L281 140Z"/><path d="M301 140 L292 146 L287 151 L284 157 L278 162 L269 165 L260 168 L249 170 L237 168 L232 160 L234 151 L234 145 L226 140 L220 132 L222 124 L231 119 L240 116 L250 113 L260 114 L268 119 L275 122 L285 122 L299 124 L306 131 L301 140Z"/><path d="M328 140 L313 150 L304 158 L299 168 L289 176 L275 181 L260 185 L241 190 L223 186 L215 172 L217 158 L217 148 L205 140 L195 127 L198 115 L212 106 L228 100 L244 96 L260 98 L273 105 L284 110 L301 111 L324 114 L335 126 L328 140Z"/><path d="M348 140 L329 153 L318 164 L311 177 L298 187 L280 193 L260 199 L236 205 L211 200 L201 182 L204 163 L203 151 L188 140 L174 124 L179 107 L198 96 L218 88 L238 83 L260 85 L277 94 L291 101 L314 102 L343 106 L358 121 L348 140Z"/><path d="M366 140 L343 156 L329 169 L321 184 L306 196 L284 204 L260 211 L231 218 L202 212 L189 191 L193 167 L192 153 L174 140 L158 120 L163 100 L186 87 L210 78 L234 71 L260 74 L281 85 L297 94 L324 94 L359 99 L378 118 L366 140Z"/><path d="M390 140 L362 160 L346 175 L336 194 L316 210 L289 218 L260 227 L224 236 L188 229 L172 203 L178 174 L177 156 L154 140 L134 116 L141 91 L168 75 L198 63 L228 55 L260 58 L285 73 L306 83 L339 83 L383 89 L405 112 L390 140Z"/><path d="M412 140 L379 163 L360 181 L348 203 L325 221 L294 231 L260 241 L218 251 L176 244 L158 213 L165 179 L163 159 L137 140 L113 112 L122 83 L153 64 L188 51 L223 42 L260 45 L289 62 L314 74 L352 74 L403 81 L428 108 L412 140Z"/><path d="M436 140 L398 166 L376 188 L362 213 L336 234 L300 246 L260 258 L211 270 L163 260 L141 225 L149 186 L147 162 L117 140 L89 107 L99 74 L136 51 L176 36 L217 25 L260 30 L294 49 L323 63 L368 63 L426 72 L456 102 L436 140Z"/><path d="M877 150 L875 155 L868 157 L861 158 L859 161 L855 165 L850 167 L844 166 L838 164 L833 162 L830 158 L831 154 L834 150 L833 147 L830 142 L831 136 L837 134 L844 135 L850 136 L855 137 L860 138 L864 140 L868 143 L873 146 L877 150Z"/><path d="M897 150 L893 158 L880 163 L870 164 L865 168 L860 175 L850 180 L839 178 L830 175 L821 171 L816 164 L817 156 L822 150 L821 144 L816 136 L817 126 L827 122 L840 124 L850 126 L859 127 L867 129 L874 133 L880 137 L890 142 L897 150Z"/><path d="M928 150 L922 164 L901 171 L883 174 L875 181 L866 193 L850 200 L832 198 L816 192 L801 185 L792 174 L795 160 L803 150 L801 141 L792 126 L794 110 L812 103 L834 106 L850 110 L865 111 L879 114 L890 121 L901 129 L917 137 L928 150Z"/><path d="M944 150 L936 166 L911 175 L890 178 L880 187 L869 201 L850 209 L829 207 L809 200 L792 192 L781 178 L785 163 L793 150 L791 139 L781 122 L784 103 L805 94 L830 97 L850 102 L867 103 L885 107 L898 116 L911 125 L930 135 L944 150Z"/><path d="M971 150 L962 171 L929 183 L902 187 L889 198 L875 216 L850 227 L822 224 L797 215 L774 204 L761 187 L765 166 L777 150 L774 135 L761 113 L764 89 L791 78 L824 82 L850 88 L873 90 L895 95 L912 106 L929 117 L953 130 L971 150Z"/><path d="M999 150 L987 176 L947 190 L914 195 L898 209 L881 232 L850 245 L816 241 L785 230 L757 216 L740 195 L746 170 L760 150 L756 132 L740 105 L744 74 L778 61 L819 66 L850 74 L878 76 L905 82 L926 95 L947 110 L977 126 L999 150Z"/><path d="M1017 150 L1004 179 L959 195 L921 201 L903 216 L884 241 L850 256 L812 252 L778 240 L746 224 L727 201 L733 172 L749 150 L745 130 L727 99 L731 65 L769 50 L815 56 L850 64 L881 67 L912 74 L936 89 L959 105 L993 123 L1017 150Z"/><path d="M1045 150 L1030 184 L978 203 L933 209 L912 227 L890 257 L850 274 L805 269 L765 255 L728 237 L706 209 L714 176 L732 150 L727 126 L706 91 L711 51 L756 33 L809 40 L850 50 L886 53 L922 61 L950 79 L977 97 L1016 118 L1045 150Z"/><path d="M579 120 L577 123 L574 126 L571 128 L568 129 L564 130 L560 129 L556 130 L551 131 L546 130 L544 127 L546 123 L548 120 L547 118 L547 115 L549 112 L552 110 L555 108 L560 107 L564 108 L567 112 L568 114 L571 115 L576 117 L579 120Z"/><path d="M609 120 L605 129 L596 135 L588 140 L580 144 L569 145 L560 144 L550 145 L537 149 L523 146 L519 137 L524 127 L528 120 L526 114 L526 106 L531 99 L539 94 L548 89 L560 86 L571 89 L577 98 L581 105 L589 108 L602 112 L609 120Z"/><path d="M634 120 L627 133 L614 142 L602 150 L589 156 L574 157 L560 156 L546 158 L525 163 L505 159 L498 145 L506 130 L512 120 L510 110 L509 99 L516 89 L528 81 L542 73 L560 68 L577 74 L586 87 L591 98 L604 102 L624 108 L634 120Z"/><path d="M656 120 L647 137 L630 149 L615 159 L598 167 L578 168 L560 166 L541 170 L515 176 L489 171 L480 153 L490 133 L498 120 L495 108 L493 93 L503 79 L519 69 L537 59 L560 53 L582 60 L594 78 L600 91 L617 97 L642 104 L656 120Z"/><path d="M682 120 L672 141 L650 157 L630 170 L609 180 L583 182 L560 179 L536 183 L502 191 L469 185 L458 162 L470 137 L480 120 L476 104 L475 85 L487 68 L508 55 L531 42 L560 34 L589 44 L604 66 L612 83 L633 90 L665 100 L682 120Z"/><path d="M700 120 L688 145 L663 163 L641 178 L616 189 L587 191 L560 188 L533 193 L494 202 L455 195 L443 168 L457 140 L468 120 L464 102 L462 80 L476 60 L500 46 L526 31 L560 22 L593 33 L610 58 L619 78 L644 85 L681 97 L700 120Z"/><path d="M728 120 L714 149 L683 171 L656 189 L627 203 L592 205 L560 201 L527 207 L481 218 L434 210 L420 178 L437 144 L450 120 L445 98 L443 72 L460 49 L488 31 L520 13 L560 3 L599 15 L620 46 L631 69 L660 79 L705 92 L728 120Z"/><path d="M751 120 L734 153 L700 178 L669 198 L636 214 L596 216 L560 212 L523 219 L470 231 L418 222 L401 186 L420 147 L436 120 L430 95 L427 65 L447 39 L478 19 L514 -1 L560 -13 L605 1 L628 36 L640 63 L674 73 L724 89 L751 120Z"/></g></svg>
<!-- contact highlight card -->
<div class="a" style="left:413px;top:188px;width:1183px;height:142px;border-radius:4px;background:#fff;box-shadow:0 2px 2px rgba(0,0,0,.1);overflow:hidden">
  <div class="a" style="left:0;top:0;width:1183px;height:68px;background:#f3f3f3"></div>
</div>
<div class="a" style="left:430px;top:205px;width:32px;height:32px;border-radius:4px;background:#5a67e3"></div>
<svg class="a" style="left:430px;top:205px" width="32" height="32" viewBox="0 0 32 32"><rect x="7" y="10" width="18" height="12" rx="1.5" fill="#fff"/><circle cx="12" cy="14" r="2" fill="#5a67e3"/><path d="M8.8 19.5C9 16.8 15 16.8 15.2 19.5Z" fill="#5a67e3"/><rect x="17" y="13" width="6" height="1.6" fill="#5a67e3"/><rect x="17" y="16.5" width="6" height="1.6" fill="#5a67e3"/></svg>
<div class="t" style="left:474px;top:206px;font-size:12.6px;color:#444">Contact</div>
<div class="t" style="left:474px;top:220px;font-size:18.5px;font-weight:700;color:#181818">Mr.</div>
<div class="a" style="left:507px;top:218px;width:122px;height:18px;background:#000"></div>
<div class="a" style="left:633px;top:218px;width:20px;height:20px;border:1px solid #747474;border-radius:4px;background:#fff"></div>
<svg class="a" style="left:637px;top:222px" width="12" height="12" viewBox="0 0 12 12"><g fill="#747474"><rect x="4.5" y="1" width="3" height="3"/><rect x="1" y="8" width="3" height="3"/><rect x="8" y="8" width="3" height="3"/></g><path d="M6 4V6M2.5 8V6H9.5V8" fill="none" stroke="#747474" stroke-width="1"/></svg>
<!-- action buttons -->
<div class="btn" style="left:1121px;top:207px;width:94px;height:32px"></div>
<svg class="a" style="left:1138px;top:218px" width="13" height="13" viewBox="0 0 13 13"><path d="M6.5 0.5V12.5M0.5 6.5H12.5" stroke="#2166ab" stroke-width="1.7"/></svg>
<div class="t" style="left:1160px;top:217px;font-size:13px;color:#2166ab">Follow</div>
<div class="btn" style="left:1219px;top:207px;width:362px;height:32px"></div>
<div class="a" style="left:1308px;top:208px;width:1px;height:30px;background:#747474"></div>
<div class="a" style="left:1399px;top:208px;width:1px;height:30px;background:#747474"></div>
<div class="a" style="left:1548px;top:208px;width:1px;height:30px;background:#747474"></div>
<div class="t" style="left:1236px;top:218px;font-size:12.4px;color:#2166ab">New Case</div>
<div class="t" style="left:1325px;top:218px;font-size:12.4px;color:#2166ab">New Note</div>
<div class="t" style="left:1416px;top:217.5px;font-size:13.2px;color:#2166ab">Submit for Approval</div>
<div class="a" style="left:1559px;top:220px;border-left:5.5px solid transparent;border-right:5.5px solid transparent;border-top:6.5px solid #747474"></div>
<!-- fields -->
<div class="t" style="left:430px;top:275px;font-size:12px;color:#444">Title</div>
<div class="t" style="left:517px;top:275px;font-size:12px;color:#444">Account Name</div>
<div class="t" style="left:659px;top:278px;font-size:12px;color:#444">Phone (2)</div>
<div class="a" style="left:715px;top:281px;border-left:5px solid transparent;border-right:5px solid transparent;border-top:6px solid #444"></div>
<svg class="a" style="left:659px;top:298px" width="13" height="13" viewBox="0 0 13 13"><path d="M3 1L5 3.8L3.8 5.2C4.5 7 6 8.5 7.8 9.2L9.2 8L12 10L10.5 12C6 12 1 7 1 2.5Z" fill="#2166ab"/></svg>
<div class="t" style="left:674px;top:297px;font-size:13px;color:#181818">+</div>
<div class="a" style="left:680px;top:296px;width:84px;height:16px;background:#000"></div>
<div class="t" style="left:822px;top:275px;font-size:12px;color:#444">Email</div>
<div class="t" style="left:914px;top:275px;font-size:12px;color:#444">Contact Owner</div>
<svg class="a" style="left:915px;top:292px" width="18" height="18" viewBox="0 0 18 18"><path d="M3 5L5 1.5L7 5M11 5L13 1.5L15 5" fill="#7d8aa0"/><circle cx="9" cy="10" r="7.5" fill="#8e9bb1"/><ellipse cx="9" cy="11" rx="5.2" ry="4.6" fill="#fff"/><path d="M4.5 7.5C6 5.5 12 5.5 13.5 7.5L12 9C10.5 8 7.5 8 6 9Z" fill="#3a4150"/></svg>
<div class="t" style="left:940px;top:294px;font-size:13px;color:#2166ab;border-bottom:1px dotted #2166ab;padding-bottom:1px">Demo User</div>
<svg class="a" style="left:1011px;top:293px" width="14" height="15" viewBox="0 0 14 15"><circle cx="5.5" cy="5" r="3" fill="#747474"/><path d="M0.5 13.5C1 9.5 10 9.5 10.5 13.5Z" fill="#747474"/><path d="M9 2.5A3.5 3.5 0 0 1 13 5.5" fill="none" stroke="#747474" stroke-width="1.2"/><path d="M12 3L13.5 5.8L11 6Z" fill="#747474"/></svg>

<!-- related panel -->
<div class="a" style="left:413px;top:342px;width:792px;height:637px;background:#fff;border-radius:4px 4px 0 0"></div>
<div class="t" style="left:442px;top:367px;font-size:15.6px;font-weight:700;color:#181818">Related</div>
<div class="t" style="left:547px;top:367px;font-size:15.6px;color:#444">Details</div>
<div class="t" style="left:643px;top:367px;font-size:15.4px;color:#444">News</div>
<div class="a" style="left:430px;top:393px;width:758px;height:1px;background:#747474"></div>
<div class="a" style="left:430px;top:391px;width:81px;height:3px;background:#3d86cf"></div>
<!-- duplicates -->
<div class="a" style="left:430px;top:406px;width:759px;height:50px;border:1px solid #d0d0d0;border-radius:4px;background:#fff"></div>
<div class="a" style="left:447px;top:419px;width:24px;height:24px;border-radius:3px;background:#f0622f"></div>
<svg class="a" style="left:447px;top:419px" width="24" height="24" viewBox="0 0 24 24"><path d="M12 4.5L8.5 8.5H11V12L7 18.5M12 12L17 18.5M13 8.5H15.5L12 4.5" fill="none" stroke="#fff" stroke-width="2"/><path d="M12 4L8 9H16Z" fill="#fff"/></svg>
<div class="t" style="left:483px;top:424px;font-size:15.9px;font-weight:700;color:#181818">We found no potential duplicates of this Contact.</div>
<!-- opportunities -->
<div class="a" style="left:430px;top:468px;width:759px;height:67px;border:1px solid #d0d0d0;border-radius:4px;background:#f3f3f3"></div>
<div class="a" style="left:447px;top:489px;width:24px;height:24px;border-radius:3px;background:#f0622f"></div>
<svg class="a" style="left:447px;top:489px" width="24" height="24" viewBox="0 0 24 24"><path d="M6 8L9 11.5L12 7L15 11.5L18 8V15.5H6Z" fill="#fff"/><rect x="6" y="16.5" width="12" height="2" fill="#fff"/><circle cx="6" cy="7.5" r="1" fill="#fff"/><circle cx="12" cy="6.5" r="1" fill="#fff"/><circle cx="18" cy="7.5" r="1" fill="#fff"/></svg>
<div class="t" style="left:483px;top:494px;font-size:16px;font-weight:700;color:#181818">Opportunities (0)</div>
<div class="btn" style="left:1112px;top:485px;width:60px;height:32px"></div>
<div class="t" style="left:1129px;top:495px;font-size:13px;color:#2166ab">New</div>
<!-- cases -->
<div class="a" style="left:430px;top:546px;width:759px;height:315px;border:1px solid #d0d0d0;border-radius:4px;background:#fff;overflow:hidden">
  <div class="a" style="left:0;top:0;width:757px;height:65px;background:#f3f3f3;border-bottom:1px solid #d0d0d0"></div>
  <div class="a" style="left:0;top:268px;width:757px;height:1px;background:#d0d0d0"></div>
</div>
<div class="a" style="left:447px;top:567px;width:24px;height:24px;border-radius:3px;background:#f0622f"></div>
<svg class="a" style="left:447px;top:567px" width="24" height="24" viewBox="0 0 24 24"><rect x="6" y="8.5" width="12" height="9" rx="1" fill="#fff"/><path d="M9.5 8.5V6.5H14.5V8.5" fill="none" stroke="#fff" stroke-width="1.3"/></svg>
<div class="t" style="left:483px;top:571px;font-size:15.3px;font-weight:700;color:#181818">Cases (6+)</div>
<div class="btn" style="left:1112px;top:563px;width:60px;height:32px"></div>
<div class="t" style="left:1129px;top:573px;font-size:13px;color:#2166ab">New</div>

<div class="t" style="left:448.5px;top:634.6px;font-size:12.6px;color:#2166ab;border-bottom:1px dotted #2166ab;padding-bottom:1px">00001373</div>
<div class="t" style="left:447px;top:656.8px;font-size:12.4px;color:#444">Subject:</div>
<div class="t" style="left:447px;top:675.7px;font-size:12.4px;color:#444">Priority:</div>
<div class="t" style="left:507px;top:675.7px;font-size:12.7px;color:#333">Medium</div>
<div class="t" style="left:447px;top:695.4px;font-size:12.4px;color:#444">Date/...</div>
<div class="t" style="left:507px;top:695.4px;font-size:12.7px;color:#333">25/8/2023, 10:08 am</div>
<div class="dd" style="left:647px;top:630px"></div>
<div class="t" style="left:701.0px;top:634.6px;font-size:12.6px;color:#2166ab;border-bottom:1px dotted #2166ab;padding-bottom:1px">00001372</div>
<div class="t" style="left:699.5px;top:656.8px;font-size:12.4px;color:#444">Subject:</div>
<div class="t" style="left:699.5px;top:675.7px;font-size:12.4px;color:#444">Priority:</div>
<div class="t" style="left:760px;top:675.7px;font-size:12.7px;color:#333">Medium</div>
<div class="t" style="left:699.5px;top:695.4px;font-size:12.4px;color:#444">Date/...</div>
<div class="t" style="left:760px;top:695.4px;font-size:12.7px;color:#333">25/8/2023, 9:54 am</div>
<div class="dd" style="left:900px;top:630px"></div>
<div class="t" style="left:953.5px;top:634.6px;font-size:12.6px;color:#2166ab;border-bottom:1px dotted #2166ab;padding-bottom:1px">00001365</div>
<div class="t" style="left:952px;top:656.8px;font-size:12.4px;color:#444">Subject:</div>
<div class="t" style="left:952px;top:675.7px;font-size:12.4px;color:#444">Priority:</div>
<div class="t" style="left:1012px;top:675.7px;font-size:12.7px;color:#333">Medium</div>
<div class="t" style="left:952px;top:695.4px;font-size:12.4px;color:#444">Date/...</div>
<div class="t" style="left:1012px;top:695.4px;font-size:12.7px;color:#333">23/8/2023, 9:32 am</div>
<div class="dd" style="left:1152px;top:630px"></div>
<div class="t" style="left:448.5px;top:724.6px;font-size:12.6px;color:#2166ab;border-bottom:1px dotted #2166ab;padding-bottom:1px">00001364</div>
<div class="t" style="left:447px;top:746.8px;font-size:12.4px;color:#444">Subject:</div>
<div class="t" style="left:447px;top:765.7px;font-size:12.4px;color:#444">Priority:</div>
<div class="t" style="left:507px;top:765.7px;font-size:12.7px;color:#333">Medium</div>
<div class="t" style="left:447px;top:785.4px;font-size:12.4px;color:#444">Date/...</div>
<div class="t" style="left:507px;top:785.4px;font-size:12.7px;color:#333">23/8/2023, 9:20 am</div>
<div class="dd" style="left:647px;top:720px"></div>
<div class="t" style="left:701.0px;top:724.6px;font-size:12.6px;color:#2166ab;border-bottom:1px dotted #2166ab;padding-bottom:1px">00001357</div>
<div class="t" style="left:699.5px;top:746.8px;font-size:12.4px;color:#444">Subject:</div>
<div class="t" style="left:699.5px;top:765.7px;font-size:12.4px;color:#444">Priority:</div>
<div class="t" style="left:760px;top:765.7px;font-size:12.7px;color:#333">Medium</div>
<div class="t" style="left:699.5px;top:785.4px;font-size:12.4px;color:#444">Date/...</div>
<div class="t" style="left:760px;top:785.4px;font-size:12.7px;color:#333">18/8/2023, 12:25 pm</div>
<div class="dd" style="left:900px;top:720px"></div>
<div class="t" style="left:953.5px;top:724.6px;font-size:12.6px;color:#2166ab;border-bottom:1px dotted #2166ab;padding-bottom:1px">00001356</div>
<div class="t" style="left:952px;top:746.8px;font-size:12.4px;color:#444">Subject:</div>
<div class="t" style="left:952px;top:765.7px;font-size:12.4px;color:#444">Priority:</div>
<div class="t" style="left:1012px;top:765.7px;font-size:12.7px;color:#333">Medium</div>
<div class="t" style="left:952px;top:785.4px;font-size:12.4px;color:#444">Date/...</div>
<div class="t" style="left:1012px;top:785.4px;font-size:12.7px;color:#333">18/8/2023, 11:53 am</div>
<div class="dd" style="left:1152px;top:720px"></div>

<div class="t" style="left:787px;top:832px;font-size:13px;color:#2166ab">View All</div>
<!-- campaign -->
<div class="a" style="left:430px;top:873px;width:759px;height:66px;border:1px solid #d0d0d0;border-radius:4px;background:#f3f3f3"></div>
<div class="a" style="left:447px;top:894px;width:24px;height:24px;border-radius:3px;background:#f0622f"></div>
<svg class="a" style="left:447px;top:894px" width="24" height="24" viewBox="0 0 24 24"><circle cx="12" cy="12" r="7" fill="none" stroke="#fff" stroke-width="1.3" opacity=".85"/><circle cx="12" cy="12" r="4.2" fill="none" stroke="#fff" stroke-width="1.3" opacity=".85"/><circle cx="12" cy="12" r="1.6" fill="#fff" opacity=".85"/></svg>
<div class="t" style="left:483px;top:898px;font-size:16px;font-weight:700;color:#181818">Campaign History (0)</div>
<div class="btn" style="left:1036px;top:890px;width:136px;height:32px"></div>
<div class="t" style="left:1053px;top:900px;font-size:13px;color:#2166ab">Add to Campaign</div>
<!-- next card (cut) -->
<div class="a" style="left:430px;top:951px;width:759px;height:60px;border:1px solid #d0d0d0;border-radius:4px;background:#f3f3f3"></div>
<div class="a" style="left:447px;top:972px;width:24px;height:24px;border-radius:3px;background:#8a8a8a"></div>
<div class="t" style="left:483px;top:975px;font-size:16px;font-weight:700;color:#181818">Notes &amp; Attachments (0)</div>
<div class="btn" style="left:1067px;top:968px;width:105px;height:32px"></div>
<!-- activity panel -->
<div class="a" style="left:1219px;top:342px;width:377px;height:541px;background:#fff;border-radius:4px;box-shadow:0 2px 2px rgba(0,0,0,.1)"></div>
<div class="t" style="left:1247.5px;top:366.5px;font-size:16px;font-weight:700;color:#181818">Activity</div>
<div class="t" style="left:1353px;top:367px;font-size:15.5px;color:#444">Chatter</div>
<div class="a" style="left:1235px;top:393px;width:345px;height:1px;background:#747474"></div>
<div class="a" style="left:1235px;top:391px;width:82px;height:3px;background:#3d86cf"></div>
<!-- activity buttons -->
<div class="btn" style="left:1239px;top:408px;width:89px;height:32px"></div>
<div class="a" style="left:1296px;top:409px;width:1px;height:30px;background:#747474"></div>
<div class="a" style="left:1256px;top:412px;width:24px;height:24px;border-radius:4px;background:#3ba55a"></div>
<svg class="a" style="left:1256px;top:412px" width="24" height="24" viewBox="0 0 24 24"><path d="M5.5 7L7 8.5L9.5 5.5" fill="none" stroke="#fff" stroke-width="1.5"/><rect x="10.5" y="7" width="8" height="1.8" rx=".9" fill="#fff"/><rect x="10.5" y="11" width="8" height="1.8" rx=".9" fill="#fff"/><rect x="10.5" y="15" width="8" height="1.8" rx=".9" fill="#fff"/><circle cx="7" cy="12" r="1" fill="#fff"/><circle cx="7" cy="16" r="1" fill="#fff"/></svg>
<div class="a" style="left:1307px;top:422px;border-left:5px solid transparent;border-right:5px solid transparent;border-top:6px solid #c9c9c9"></div>
<div class="btn" style="left:1332px;top:408px;width:89px;height:32px"></div>
<div class="a" style="left:1389px;top:409px;width:1px;height:30px;background:#747474"></div>
<div class="a" style="left:1349px;top:412px;width:24px;height:24px;border-radius:4px;background:#16a197"></div>
<svg class="a" style="left:1349px;top:412px" width="24" height="24" viewBox="0 0 24 24"><rect x="6.5" y="5" width="12" height="14" rx="2" fill="#fff"/><path d="M5.5 8H7.5M5.5 12H7.5M5.5 16H7.5" stroke="#16a197" stroke-width="1"/><path d="M10.5 8L11.8 9.8L11 10.8C11.6 12 12.5 12.8 13.5 13.3L14.4 12.5L16 13.8L15.2 15.2C12.5 15 10.2 12.5 10 9.2Z" fill="#16a197"/></svg>
<div class="a" style="left:1400px;top:422px;border-left:5px solid transparent;border-right:5px solid transparent;border-top:6px solid #747474"></div>
<div class="btn" style="left:1425px;top:408px;width:89px;height:32px"></div>
<div class="a" style="left:1482px;top:409px;width:1px;height:30px;background:#747474"></div>
<div class="a" style="left:1442px;top:412px;width:24px;height:24px;border-radius:4px;background:#eb5a8d"></div>
<svg class="a" style="left:1442px;top:412px" width="24" height="24" viewBox="0 0 24 24"><rect x="5.5" y="7" width="13" height="11" rx="1" fill="#fff"/><rect x="5.5" y="7" width="13" height="2.5" fill="#fff"/><path d="M8.5 5.5V8M15.5 5.5V8" stroke="#fff" stroke-width="1.4"/><g fill="#eb5a8d"><rect x="7.5" y="11" width="2" height="1.8"/><rect x="11" y="11" width="2" height="1.8"/><rect x="14.5" y="11" width="2" height="1.8"/><rect x="7.5" y="14.3" width="2" height="1.8"/><rect x="11" y="14.3" width="2" height="1.8"/><rect x="14.5" y="14.3" width="2" height="1.8"/></g></svg>
<div class="a" style="left:1493px;top:422px;border-left:5px solid transparent;border-right:5px solid transparent;border-top:6px solid #747474"></div>
<div class="btn" style="left:1239px;top:444px;width:89px;height:32px"></div>
<div class="a" style="left:1296px;top:445px;width:1px;height:30px;background:#747474"></div>
<div class="a" style="left:1256px;top:448px;width:24px;height:24px;border-radius:4px;background:#8c8c8c"></div>
<svg class="a" style="left:1256px;top:448px" width="24" height="24" viewBox="0 0 24 24"><rect x="5.5" y="7" width="13" height="10" rx="1" fill="#fff"/><path d="M6 7.5L12 12.5L18 7.5" fill="none" stroke="#8c8c8c" stroke-width="1.4"/></svg>
<div class="a" style="left:1307px;top:458px;border-left:5px solid transparent;border-right:5px solid transparent;border-top:6px solid #747474"></div>
<!-- filters -->
<div class="t" style="left:1311px;top:498px;font-size:13px;color:#444">Filters: All time • All activities • All types</div>
<div class="btn" style="left:1548px;top:487px;width:32px;height:31px"></div>
<svg class="a" style="left:1557px;top:495px" width="14" height="14" viewBox="0 0 14 14"><g fill="#747474"><circle cx="7" cy="7" r="4.6"/><rect x="5.6" y="0.5" width="2.8" height="13" rx=".6"/><rect x="5.6" y="0.5" width="2.8" height="13" rx=".6" transform="rotate(60 7 7)"/><rect x="5.6" y="0.5" width="2.8" height="13" rx=".6" transform="rotate(120 7 7)"/></g><circle cx="7" cy="7" r="2.2" fill="#fff"/></svg>
<div class="t" style="left:1402px;top:530px;font-size:12px;color:#2166ab">Refresh</div>
<div class="t" style="left:1449px;top:530px;font-size:12.4px;color:#444">•</div>
<div class="t" style="left:1459px;top:530px;font-size:12.4px;color:#2166ab">Expand All</div>
<div class="t" style="left:1523px;top:530px;font-size:12.4px;color:#444">•</div>
<div class="t" style="left:1534px;top:530px;font-size:12.4px;color:#2166ab">View All</div>
<!-- upcoming -->
<div class="a" style="left:1236px;top:562px;width:343px;height:30px;border-radius:4px;background:#f3f3f3"></div>
<svg class="a" style="left:1246px;top:573px" width="12" height="8" viewBox="0 0 12 8"><path d="M1 1.2L6 6.2L11 1.2" fill="none" stroke="#181818" stroke-width="1.6"/></svg>
<div class="t" style="left:1268px;top:570.5px;font-size:13px;font-weight:700;color:#181818">Upcoming &amp; Overdue</div>

<svg class="a" style="left:1237px;top:612px" width="9" height="13" viewBox="0 0 9 13"><path d="M1.5 1L7 6.5L1.5 12" fill="none" stroke="#444" stroke-width="1.5"/></svg>
<div class="a" style="left:1259px;top:605px;width:24px;height:24px;border-radius:3px;background:#42b9c2"></div>
<svg class="a" style="left:1259px;top:605px" width="24" height="24" viewBox="0 0 24 24"><rect x="6.5" y="5" width="12" height="14" rx="2" fill="#fff"/><path d="M5.5 8H7.5M5.5 12H7.5M5.5 16H7.5" stroke="#42b9c2" stroke-width="1"/><path d="M10.5 8L11.8 9.8L11 10.8C11.6 12 12.5 12.8 13.5 13.3L14.4 12.5L16 13.8L15.2 15.2C12.5 15 10.2 12.5 10 9.2Z" fill="#42b9c2"/></svg>
<div class="a" style="left:1269px;top:633px;width:2px;height:30px;background:#1f9a8f"></div>
<div class="t" style="left:1302px;top:611.5px;font-size:13.4px;color:#2166ab">New Call</div>
<div class="t" style="left:1470px;top:614.1px;font-size:12px;color:#444">No due date</div>
<div class="dd" style="left:1548px;top:608px"></div>
<div class="t" style="left:1302px;top:637.1999999999999px;font-size:12.7px;color:#181818">You logged a call</div>
<svg class="a" style="left:1237px;top:674px" width="9" height="13" viewBox="0 0 9 13"><path d="M1.5 1L7 6.5L1.5 12" fill="none" stroke="#444" stroke-width="1.5"/></svg>
<div class="a" style="left:1259px;top:667px;width:24px;height:24px;border-radius:3px;background:#42b9c2"></div>
<svg class="a" style="left:1259px;top:667px" width="24" height="24" viewBox="0 0 24 24"><rect x="6.5" y="5" width="12" height="14" rx="2" fill="#fff"/><path d="M5.5 8H7.5M5.5 12H7.5M5.5 16H7.5" stroke="#42b9c2" stroke-width="1"/><path d="M10.5 8L11.8 9.8L11 10.8C11.6 12 12.5 12.8 13.5 13.3L14.4 12.5L16 13.8L15.2 15.2C12.5 15 10.2 12.5 10 9.2Z" fill="#42b9c2"/></svg>
<div class="a" style="left:1269px;top:695px;width:2px;height:30px;background:#1f9a8f"></div>
<div class="t" style="left:1302px;top:673.5px;font-size:13.4px;color:#2166ab">New Call</div>
<div class="t" style="left:1470px;top:676.1px;font-size:12px;color:#444">No due date</div>
<div class="dd" style="left:1548px;top:670px"></div>
<div class="t" style="left:1302px;top:699.1999999999999px;font-size:12.7px;color:#181818">You logged a call</div>

<div class="btn" style="left:1360px;top:726px;width:94px;height:32px"></div>
<div class="t" style="left:1377px;top:736px;font-size:13px;color:#2166ab">View More</div>
<div class="a" style="left:1236px;top:774px;width:343px;height:1px;background:#d0d0d0"></div>
<div class="t" style="left:1218px;top:795px;width:378px;text-align:center;font-size:12.7px;color:#444">No past activity. Past meetings and tasks marked as done</div>
<div class="t" style="left:1218px;top:814px;width:378px;text-align:center;font-size:12.7px;color:#444">show up here.</div>

<!-- ============ SOFTPHONE OVERLAY ============ -->
<div class="a" style="left:17px;top:331px;width:400px;height:648px;background:#fff;border-radius:4px 4px 0 0;box-shadow:0 0 3px rgba(0,0,0,.15);border-right:1px solid #d8d8d8;border-left:1px solid #d4d4d4"></div>
<svg class="a" style="left:34px;top:343px" width="16" height="16" viewBox="0 0 16 16"><path d="M3.5 1L6.3 4.6L4.8 6.4C5.7 8.5 7.5 10.3 9.6 11.2L11.4 9.7L15 12.5L13 15C6.5 15 1 9.5 1 3Z" fill="#747474"/></svg>
<div class="t" style="left:62px;top:346.5px;font-size:13px;color:#181818">Softphone</div>
<div class="a" style="left:358px;top:357px;width:13px;height:2px;background:#747474"></div>
<svg class="a" style="left:385px;top:345px" width="15" height="15" viewBox="0 0 15 15"><path d="M6 3H1.7V13.3H12V9" fill="none" stroke="#747474" stroke-width="1.5"/><path d="M6 9L13.5 1.5M8.5 1.2H13.8V6.5" fill="none" stroke="#747474" stroke-width="1.5"/></svg>
<div class="a" style="left:18px;top:374px;width:398px;height:2px;background:#6b2a9b"></div>
<div class="t" style="left:292px;top:388px;font-size:15.6px;font-weight:700;color:#101828">Connected Call</div>
<div class="a" style="left:18px;top:414px;width:398px;height:1px;background:#eef0f3"></div>
<div class="a" style="left:56px;top:415px;width:1px;height:564px;background:#eef0f3"></div>
<!-- rail -->
<svg class="a" style="left:29px;top:433px" width="16" height="16" viewBox="0 0 16 16"><path d="M8 0.5V15.5M0.5 8H15.5" stroke="#101828" stroke-width="1.8"/></svg>
<div class="a" style="left:20px;top:466px;width:36px;height:1px;background:#eef0f3"></div>
<div class="a" style="left:23px;top:477px;width:28px;height:29px;border-radius:4px;background:#d6ecf8"></div>
<svg class="a" style="left:28px;top:482px" width="18" height="18" viewBox="0 0 18 18"><path d="M4.2 1.5L7 5.2L5.6 7.2C6.5 9.2 8.6 11.4 10.8 12.4L12.8 11L16.5 13.8L14.8 16.3C8 16.5 1.5 10 1.7 3.2Z" fill="none" stroke="#101828" stroke-width="1.5" stroke-linejoin="round"/></svg>
<svg class="a" style="left:28px;top:735px" width="18" height="18" viewBox="0 0 18 18"><path d="M3 6.5A7 7 0 1 1 2.5 11" fill="none" stroke="#101828" stroke-width="1.7"/><path d="M1 3V7.5H5.5" fill="none" stroke="#101828" stroke-width="1.7"/><path d="M9.5 5V9.5L12.5 12" fill="none" stroke="#101828" stroke-width="1.7"/></svg>
<svg class="a" style="left:28px;top:775px" width="18" height="18" viewBox="0 0 18 18"><path d="M1.5 1V16.5H17" fill="none" stroke="#101828" stroke-width="1.7"/><path d="M4.5 11.5L8 7.5L10.5 10L15 5.5" fill="none" stroke="#101828" stroke-width="1.7"/></svg>
<svg class="a" style="left:28px;top:815px" width="18" height="18" viewBox="0 0 18 18"><circle cx="6.5" cy="4.8" r="3.2" fill="none" stroke="#101828" stroke-width="1.6"/><path d="M1 16C1 11 12 11 12 16Z" fill="none" stroke="#101828" stroke-width="1.6"/><circle cx="13" cy="5" r="2.8" fill="#101828"/><path d="M11 9.5C14 9 17.5 11 17.5 16H13.5" fill="#101828"/></svg>
<svg class="a" style="left:29px;top:857px" width="16" height="16" viewBox="0 0 16 16"><g fill="none" stroke="#101828" stroke-width="1.6"><rect x="1" y="1" width="5" height="5" rx=".8"/><rect x="10" y="1" width="5" height="5" rx=".8"/><rect x="1" y="10" width="5" height="5" rx=".8"/><rect x="10" y="10" width="5" height="5" rx=".8"/></g></svg>
<svg class="a" style="left:29px;top:896px" width="17" height="17" viewBox="0 0 17 17"><path d="M2 1.5H15V11L11 15.5H2Z" fill="none" stroke="#101828" stroke-width="1.7" stroke-linejoin="round"/><path d="M15 11H11V15.5Z" fill="#101828"/><path d="M4.5 4.5V5.5M4.5 8V9M4.5 11.5V12.5" stroke="#101828" stroke-width="1.3"/></svg>
<div class="a" style="left:23px;top:941px;width:29px;height:29px;border-radius:50%;background:#f0d9ee"></div>
<div class="t" style="left:26.5px;top:949px;font-size:12.5px;color:#6d2e6e;letter-spacing:1px">DM</div>
<div class="a" style="left:43px;top:960px;width:8px;height:8px;border-radius:50%;background:#e53935;border:1px solid #fff"></div>
<!-- voice card -->
<div class="a" style="left:69px;top:427px;width:336px;height:89px;border-radius:8px;background:#fff;box-shadow:0 0 2px rgba(16,24,40,.12);overflow:hidden">
  <div class="a" style="left:0;top:0;width:336px;height:48px;background:#f4f5f8"></div>
  <div class="a" style="left:9px;top:24px;width:320px;height:1px;background:#e6e8ec"></div>
</div>
<div class="t" style="left:78.5px;top:432.5px;font-size:12px;color:#353b45">VoiceQueue_Dane</div>
<div class="a" style="left:182.5px;top:431px;width:1.5px;height:16px;background:#101828"></div>
<div class="t" style="left:190px;top:432.5px;font-size:12px;color:#101828;font-weight:700;letter-spacing:-.4px">00:01</div>
<div class="a" style="left:77px;top:458px;width:14px;height:14px;border-radius:50%;background:#f8d7d9"></div>
<div class="a" style="left:80.5px;top:461.5px;width:7px;height:7px;border-radius:50%;background:#e5383b"></div>
<div class="t" style="left:101.5px;top:459px;font-size:12px;color:#e04a4f">Recording</div>
<div class="a" style="left:355px;top:458px;width:5px;height:13px;border:2px solid #1d2433;border-radius:1.5px"></div>
<div class="a" style="left:361px;top:458px;width:5px;height:13px;border:2px solid #1d2433;border-radius:1.5px"></div>
<div class="a" style="left:381px;top:458px;width:13px;height:13px;border:2px solid #1d2433;border-radius:2px"></div>
<div class="t" style="left:79px;top:489px;font-size:12px;color:#353b45">+</div>
<div class="a" style="left:86px;top:490px;width:81px;height:11px;background:#000"></div>
<div class="a" style="left:331px;top:485px;width:63px;height:23px;border-radius:5px;background:#d3ebf6"></div>
<svg class="a" style="left:340px;top:489px" width="17" height="15" viewBox="0 0 17 15"><path d="M1.5 7V8M4 5V10M6.5 1.5V13.5M8.5 4.5V11M10.5 3.5V12M13 7V8" stroke="#1d2433" stroke-width="1.1"/></svg>
<div class="t" style="left:362.5px;top:491px;font-size:11.6px;font-weight:700;color:#1d2433">Live</div>
<!-- wrap up / notes -->
<div class="a" style="left:68px;top:528px;width:338px;height:42px;border-radius:8px;border:1px solid #e6e8ec;background:#fff"></div>
<div class="t" style="left:79.5px;top:540.5px;font-size:15px;font-weight:700;color:#101828">Wrap Up Code</div>
<div class="a" style="left:191.5px;top:547.5px;width:4px;height:4px;border-radius:50%;background:#101828"></div>
<div class="t" style="left:207px;top:542px;font-size:14.5px;color:#8a8f98">Optional</div>
<div class="a" style="left:369.5px;top:536px;width:26px;height:26px;border-radius:50%;background:#f4f5f7"></div>
<svg class="a" style="left:376px;top:545px" width="13" height="8" viewBox="0 0 13 8"><path d="M1 1.2L6.5 6.5L12 1.2" fill="none" stroke="#3aa0c8" stroke-width="1.5"/></svg>
<div class="a" style="left:68px;top:580px;width:338px;height:42px;border-radius:8px;border:1px solid #e6e8ec;background:#fff"></div>
<div class="t" style="left:79.5px;top:593px;font-size:15px;font-weight:700;color:#101828">Notes</div>
<div class="a" style="left:131px;top:599px;width:4px;height:4px;border-radius:50%;background:#101828"></div>
<div class="t" style="left:145.5px;top:593.5px;font-size:14.5px;color:#8a8f98">Optional</div>
<div class="a" style="left:369.5px;top:588px;width:26px;height:26px;border-radius:50%;background:#f4f5f7"></div>
<svg class="a" style="left:376px;top:597px" width="13" height="8" viewBox="0 0 13 8"><path d="M1 1.2L6.5 6.5L12 1.2" fill="none" stroke="#3aa0c8" stroke-width="1.5"/></svg>
<!-- attached data -->
<div class="a" style="left:69px;top:632px;width:337px;height:194px;border-radius:10px;background:#f5f6f9"></div>
<div class="t" style="left:79.5px;top:645.5px;font-size:14.8px;font-weight:700;color:#101828">Attached Data</div>
<div class="a" style="left:370.5px;top:641px;width:24px;height:24px;border-radius:50%;background:#fbfbfc"></div>
<svg class="a" style="left:376.5px;top:649.5px" width="13" height="8" viewBox="0 0 13 8"><path d="M1 6.8L6.5 1.5L12 6.8" fill="none" stroke="#3aa0c8" stroke-width="1.5"/></svg>
<div class="t" style="left:79.5px;top:675px;font-size:14px;font-weight:700;color:#101828">Name</div>
<div class="t" style="left:79.5px;top:704px;font-size:14px;color:#101828">Dane Maddox</div>
<div class="a" style="left:79px;top:741px;width:315px;height:74px;border-radius:8px;background:#e3e6ea"></div>
<div class="t" style="left:89.5px;top:755px;font-size:12.7px;font-weight:700;color:#101828">Transcript</div>
<div class="a" style="left:360px;top:749.5px;width:24px;height:24px;border-radius:50%;background:#fff"></div>
<svg class="a" style="left:366px;top:758px" width="13" height="8" viewBox="0 0 13 8"><path d="M1 6.8L6.5 1.5L12 6.8" fill="none" stroke="#3aa0c8" stroke-width="1.5"/></svg>
<div class="a" style="left:89px;top:781px;width:296px;height:25px;border-radius:3px;background:#fff"></div>
<div class="t" style="left:99px;top:787px;font-size:12px;color:#101828">customer service</div>
<!-- call controls -->
<div class="a" style="left:68px;top:925px;width:337px;height:1px;background:#e6e8ec"></div>
<div class="a" style="left:120px;top:938px;width:30px;height:30px;border-radius:50%;background:#e7e8eb"></div>
<svg class="a" style="left:126px;top:946px" width="17" height="15" viewBox="0 0 17 15"><g fill="none" stroke="#1d2433" stroke-width="1.2"><circle cx="3.5" cy="2" r="1.3" fill="#1d2433"/><circle cx="13.5" cy="2" r="1.3" fill="#1d2433"/><path d="M1.8 8.5V5.2H5.2V8.5M2.5 8.5V14M4.5 8.5V14M11.8 8.5V5.2H15.2V8.5M12.5 8.5V14M14.5 8.5V14"/><path d="M5.5 6.8H11.5"/></g></svg>
<div class="a" style="left:160px;top:938px;width:30px;height:30px;border-radius:50%;background:#e7e8eb"></div>
<svg class="a" style="left:166px;top:946px" width="17" height="15" viewBox="0 0 17 15"><rect x="1" y="5.5" width="12" height="8" rx="1.2" fill="none" stroke="#1d2433" stroke-width="1.5"/><path d="M3 3.3H11M4 1.2H10" stroke="#1d2433" stroke-width="1.4"/><circle cx="13.5" cy="11.5" r="3.3" fill="#1d2433"/><circle cx="13.5" cy="10.5" r="1" fill="#e7e8eb"/><path d="M11.8 13.3C12.3 12 14.7 12 15.2 13.3" stroke="#e7e8eb" stroke-width="1"/></svg>
<div class="a" style="left:200px;top:938px;width:30px;height:30px;border-radius:50%;background:#e7e8eb"></div>
<svg class="a" style="left:208px;top:944px" width="14" height="19" viewBox="0 0 14 19"><g fill="none" stroke="#101828" stroke-width="1.1"><circle cx="2.5" cy="2.5" r="1.3"/><circle cx="7" cy="2.5" r="1.3"/><circle cx="11.5" cy="2.5" r="1.3"/><circle cx="2.5" cy="6.7" r="1.3"/><circle cx="7" cy="6.7" r="1.3"/><circle cx="11.5" cy="6.7" r="1.3"/><circle cx="2.5" cy="10.9" r="1.3"/><circle cx="7" cy="10.9" r="1.3"/><circle cx="11.5" cy="10.9" r="1.3"/><circle cx="7" cy="15.5" r="1.3"/></g></svg>
<div class="a" style="left:240px;top:938px;width:30px;height:30px;border-radius:50%;background:#e7e8eb"></div>
<div class="a" style="left:249px;top:946px;width:5.5px;height:13.5px;border:2.1px solid #1d2433;border-radius:1.5px"></div>
<div class="a" style="left:255.5px;top:946px;width:5.5px;height:13.5px;border:2.1px solid #1d2433;border-radius:1.5px"></div>
<div class="a" style="left:280px;top:938px;width:30px;height:30px;border-radius:50%;background:#e7e8eb"></div>
<svg class="a" style="left:287px;top:943px" width="16" height="20" viewBox="0 0 16 20"><rect x="5" y="1" width="6" height="11" rx="3" fill="none" stroke="#101828" stroke-width="1.6"/><path d="M2 9A6 6 0 0 0 14 9M8 15V18.5M4.5 18.5H11.5" fill="none" stroke="#101828" stroke-width="1.6"/></svg>
<div class="a" style="left:320px;top:936px;width:35px;height:35px;border-radius:50%;background:#ee3b2f"></div>
<svg class="a" style="left:327px;top:947px" width="21" height="12" viewBox="0 0 21 12"><path d="M1.5 6.5C6 1 15 1 19.5 6.5L17 9L14 7.2V5C12 4.3 9 4.3 7 5V7.2L4 9Z" fill="none" stroke="#fff" stroke-width="1.4" stroke-linejoin="round"/></svg>

<!-- ============ UTILITY BAR ============ -->
<div class="a" style="left:1px;top:979px;width:1608px;height:42px;background:#fff;border-top:1px solid #c9c9c9;box-shadow:0 -1px 2px rgba(0,0,0,.12)"></div>
<div class="a" style="left:0;top:1020px;width:1627px;height:1px;background:#505a66"></div>
<div class="a" style="left:1px;top:980px;width:106px;height:40px;background:#eaf3fc"></div>
<div class="a" style="left:1px;top:1017px;width:106px;height:4px;background:#5a2290"></div>
<svg class="a" style="left:13px;top:993px" width="14" height="14" viewBox="0 0 16 16"><path d="M3.5 1L6.3 4.6L4.8 6.4C5.7 8.5 7.5 10.3 9.6 11.2L11.4 9.7L15 12.5L13 15C6.5 15 1 9.5 1 3Z" fill="#181818"/></svg>
<div class="t" style="left:35px;top:995px;font-size:12.8px;color:#181818">Softphone</div>
<svg class="a" style="left:120.5px;top:993px" width="14" height="14" viewBox="0 0 14 14"><circle cx="7" cy="7" r="5.8" fill="none" stroke="#181818" stroke-width="1.5"/><path d="M7 3.8V7.3L9.2 9" fill="none" stroke="#181818" stroke-width="1.5"/></svg>
<div class="t" style="left:143px;top:995px;font-size:12.8px;color:#444">History</div>


<!-- ============ SCROLLBAR ============ -->
<div class="a" style="left:1609px;top:86px;width:18px;height:935px;background:#f1f1f1"></div>
<div class="a" style="left:1611px;top:103px;width:13px;height:748px;background:#c1c1c1"></div>
<svg class="a" style="left:1612px;top:1007px" width="10" height="7" viewBox="0 0 10 7"><path d="M1 1H9L5 6Z" fill="#505050"/></svg>
<svg class="a" style="left:1612px;top:92px" width="10" height="7" viewBox="0 0 10 7"><path d="M1 6H9L5 1Z" fill="#a3a3a3"/></svg>
<div class="a" style="left:1626px;top:0;width:1px;height:1021px;background:#3a4656"></div>

</div></body></html>
